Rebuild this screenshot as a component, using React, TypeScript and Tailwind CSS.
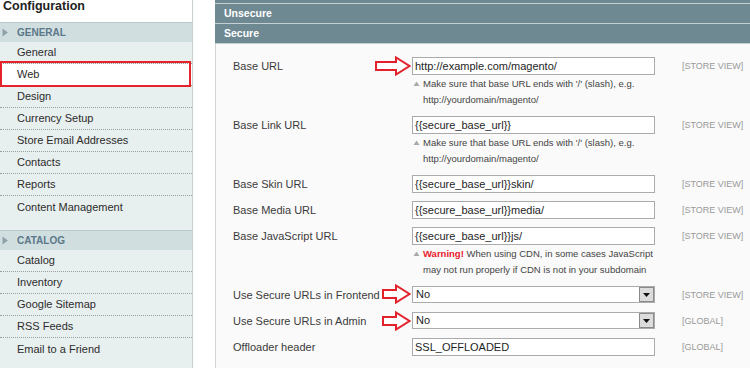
import React from "react";

const general = ["General", "Web", "Design", "Currency Setup", "Store Email Addresses", "Contacts", "Reports", "Content Management"];
const catalog = ["Catalog", "Inventory", "Google Sitemap", "RSS Feeds", "Email to a Friend"];

export default function App() {
  return (
    <div className="flex h-[368px] w-[750px] overflow-hidden bg-white font-['Liberation_Sans',Arial,sans-serif] text-[#333]">
      <aside className="flex w-[193px] shrink-0 flex-col border-r border-[#c8d0d0]">
        <h1 className="h-[22px] pl-[3px] text-[12.5px] font-bold leading-[13px] text-[#222]">Configuration</h1>
        <div className="flex flex-1 flex-col bg-[#e8efef]">
          <NavGroup title="GENERAL" items={general} active="Web" />
          <div className="h-[12px]" />
          <NavGroup title="CATALOG" items={catalog} />
        </div>
      </aside>

      <main className="ml-[22px] flex flex-1 flex-col">
        <div className="h-[4px] border-b border-[#c3d0d4] bg-[#6f8992]" />
        <SectionBar title="Unsecure" />
        <SectionBar title="Secure" />

        <div className="flex-1 border-l border-[#d3d3d3] bg-[#fafafa] pl-[17px] pt-[13px] text-[11px]">
          <Row label="Base URL" scope="[STORE VIEW]" arrow={<Arrow width={36} className="absolute -left-[37px] top-[-1px]" />}>
            <TextField value="http://example.com/magento/" />
            <Note>
              Make sure that base URL ends with '/' (slash), e.g.
              <br />
              http://yourdomain/magento/
            </Note>
          </Row>
          <Row label="Base Link URL" scope="[STORE VIEW]">
            <TextField value="{{secure_base_url}}" />
            <Note>
              Make sure that base URL ends with '/' (slash), e.g.
              <br />
              http://yourdomain/magento/
            </Note>
          </Row>
          <Row label="Base Skin URL" scope="[STORE VIEW]">
            <TextField value="{{secure_base_url}}skin/" />
          </Row>
          <Row label="Base Media URL" scope="[STORE VIEW]">
            <TextField value="{{secure_base_url}}media/" />
          </Row>
          <Row label="Base JavaScript URL" scope="[STORE VIEW]">
            <TextField value="{{secure_base_url}}js/" />
            <Note>
              <span className="font-bold text-[#e8202a]">Warning!</span> When using CDN, in some cases JavaScript
              <br />
              may not run properly if CDN is not in your subdomain
            </Note>
          </Row>
          <Row label="Use Secure URLs in Frontend" scope="[STORE VIEW]" arrow={<Arrow width={29} className="absolute -left-[30px] top-[-2px]" />}>
            <SelectField value="No" />
          </Row>
          <Row label="Use Secure URLs in Admin" scope="[GLOBAL]" arrow={<Arrow width={29} className="absolute -left-[30px] top-[-1px]" />}>
            <SelectField value="No" />
          </Row>
          <Row label="Offloader header" scope="[GLOBAL]">
            <TextField value="SSL_OFFLOADED" />
          </Row>
        </div>
      </main>
    </div>
  );
}

function NavGroup({ title, items, active }: { title: string; items: string[]; active?: string }) {
  return (
    <div>
      <div className="flex h-[20px] items-center border-t border-[#b9c8cb] bg-[#d0dee0]">
        <svg width="17" height="9" viewBox="0 0 17 9" className="shrink-0">
          <path d="M2.5 0.5L8 4.5L2.5 8.5Z" fill="#8fa2aa" />
        </svg>
        <span className="text-[10px] font-bold text-[#5a7888]">{title}</span>
      </div>
      <ul>
        {items.map((item, i) => (
          <li
            key={item}
            className={`relative flex h-[22px] items-center pl-[17px] text-[11px] text-[#2c2c2c] ${
              i < items.length - 1 ? "border-b border-dotted border-[#9c9c9c]" : ""
            } ${item === active ? "bg-white" : ""}`}
          >
            {item === active && (
              <span className="pointer-events-none absolute -top-[3px] bottom-[-2px] left-0 right-[1px] border-2 border-[#e6222b]" />
            )}
            {item}
          </li>
        ))}
      </ul>
    </div>
  );
}

function SectionBar({ title }: { title: string }) {
  return (
    <div className="flex h-[20px] items-center border-b border-[#c3d0d4] bg-[#6f8992] pl-[9px] text-[10.5px] font-bold text-white">
      {title}
    </div>
  );
}

function Row({
  label,
  scope,
  arrow,
  children,
}: {
  label: string;
  scope: string;
  arrow?: React.ReactNode;
  children: React.ReactNode;
}) {
  return (
    <div className="mb-[8px] flex items-start">
      <div className="w-[179px] shrink-0 leading-[18px] text-[#3a3a3a]">{label}</div>
      <div className="relative w-[243px] shrink-0">
        {arrow}
        {children}
      </div>
      <div className="ml-[27px] text-[9px] leading-[18px] text-[#999]">{scope}</div>
    </div>
  );
}

function TextField({ value }: { value: string }) {
  return (
    <input
      readOnly
      defaultValue={value}
      className="block h-[18px] w-full border border-[#ababab] bg-white px-[2px] text-[11px] leading-[16px] text-[#1e1e1e] outline-none"
    />
  );
}

function SelectField({ value }: { value: string }) {
  return (
    <div className="flex h-[17px] w-full items-center border border-[#ababab] bg-white pl-[3px] text-[11px] text-[#1e1e1e]">
      <span className="flex-1">{value}</span>
      <span className="flex h-[15px] w-[15px] items-center justify-center border border-[#8a8a8a] bg-[#dcdcdc]">
        <svg width="7" height="4" viewBox="0 0 7 4">
          <path d="M0 0H7L3.5 4Z" fill="#111" />
        </svg>
      </span>
    </div>
  );
}

function Note({ children }: { children: React.ReactNode }) {
  return (
    <div className="flex pt-[1px] text-[9.5px] leading-[16px] text-[#444]">
      <svg width="11" height="16" viewBox="0 0 11 16" className="shrink-0">
        <path d="M1.5 10L4.5 5.5L7.5 10Z" fill="#a9a9a9" />
      </svg>
      <div>{children}</div>
    </div>
  );
}

function Arrow({ width, className }: { width: number; className: string }) {
  const neck = width - 15;
  return (
    <svg className={className} width={width} height={20} viewBox={`0 0 ${width} 20`} fill="none">
      <path
        d={`M1 6H${neck}V1.5L${width - 1.5} 10L${neck} 18.5V14H1Z`}
        fill="#fff"
        stroke="#e3212b"
        strokeWidth="2"
      />
    </svg>
  );
}
